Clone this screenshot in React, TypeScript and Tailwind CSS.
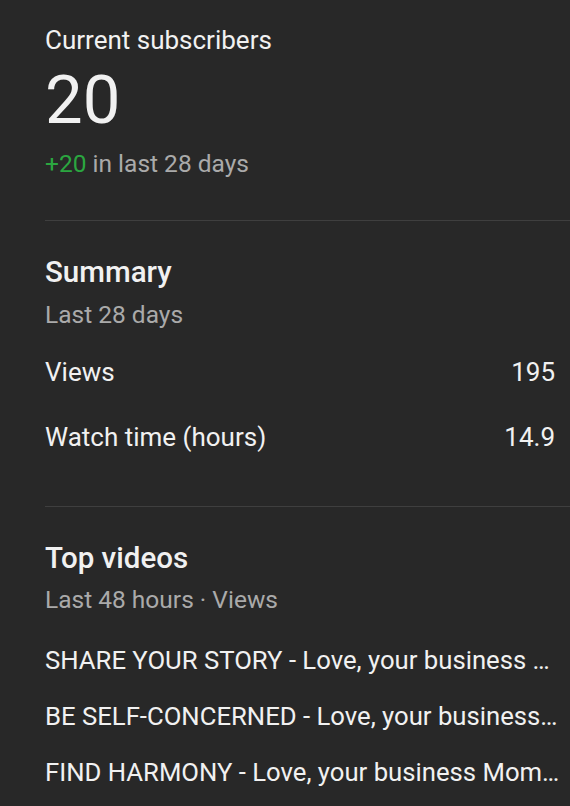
import React from "react";

const videos = [
  "SHARE YOUR STORY - Love, your business …",
  "BE SELF-CONCERNED - Love, your business…",
  "FIND HARMONY - Love, your business Mom…",
];

export default function App() {
  return (
    <div
      className="w-full min-h-[806px] bg-[#282828] text-[#f1f1f1] overflow-hidden"
      style={{ fontFamily: "Roboto, 'Noto Sans', sans-serif" }}
    >
      {/* Current subscribers */}
      <section className="pl-[45px] pr-[15px] pt-[24px]">
        <div className="text-[26px] leading-[32px]">Current subscribers</div>
        <div className="mt-[11px] text-[67px] leading-[66px]">20</div>
        <div className="mt-[15px] text-[24.5px] leading-[32px] text-[#aaaaaa]">
          <span className="text-[#2ba640]">+20</span> in last 28 days
        </div>
      </section>

      <div className="ml-[45px] mt-[40px] h-px bg-[#3f3f3f]" />

      {/* Summary */}
      <section className="pl-[45px] pr-[15px]">
        <h2 className="mt-[33px] text-[29.5px] leading-[36px] font-medium">Summary</h2>
        <div className="mt-[9px] text-[24.5px] leading-[32px] text-[#aaaaaa]">Last 28 days</div>
        <div className="mt-[25px] flex justify-between text-[26px] leading-[32px]">
          <span>Views</span>
          <span>195</span>
        </div>
        <div className="mt-[33px] flex justify-between text-[26px] leading-[32px]">
          <span>Watch time (hours)</span>
          <span>14.9</span>
        </div>
      </section>

      <div className="ml-[45px] mt-[53px] h-px bg-[#3f3f3f]" />

      {/* Top videos */}
      <section className="pl-[45px] pr-[4px]">
        <h2 className="mt-[33px] text-[29.5px] leading-[36px] font-medium">Top videos</h2>
        <div className="mt-[8px] text-[24.5px] leading-[32px] text-[#aaaaaa]">Last 48 hours · Views</div>
        <div className="mt-[28px] flex flex-col gap-[24px]">
          {videos.map((v) => (
            <div key={v} className="text-[25.7px] leading-[32px] whitespace-nowrap">
              {v}
            </div>
          ))}
        </div>
      </section>
    </div>
  );
}
